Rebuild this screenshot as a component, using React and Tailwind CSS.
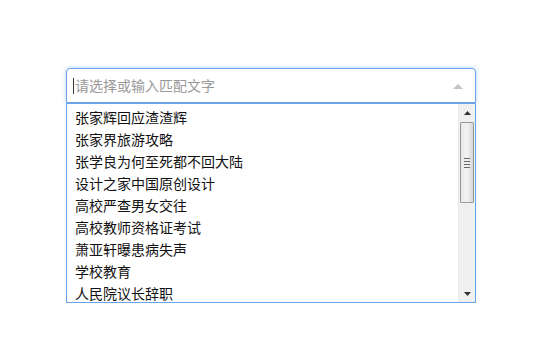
const items = [
  "张家辉回应渣渣辉",
  "张家界旅游攻略",
  "张学良为何至死都不回大陆",
  "设计之家中国原创设计",
  "高校严查男女交往",
  "高校教师资格证考试",
  "萧亚轩曝患病失声",
  "学校教育",
  "人民院议长辞职",
];

export default function App() {
  return (
    <div
      className="w-[539px] h-[360px] bg-white pt-[68px] pl-[66px]"
      style={{ fontFamily: '"Noto Sans CJK SC", "Liberation Sans", sans-serif' }}
    >
      <div className="w-[410px]">
        <div className="h-[35px] flex items-center border border-[#6aa4e8] rounded-t-[4px] shadow-[0_0_4px_rgba(102,160,232,0.5)] bg-white pl-[6px] pr-[10px]">
          <span className="w-px h-[16px] bg-[#333] mr-px" />
          <span className="flex-1 text-[14px] text-[#999]">请选择或输入匹配文字</span>
          <svg width="10" height="6" viewBox="0 0 10 6" className="mr-[2px]">
            <path d="M0 6 L5 1 L10 6 Z" fill="#c4c4c4" />
          </svg>
        </div>
        <div className="h-[200px] flex border border-[#6aa4e8] bg-white overflow-hidden">
          <ul className="flex-1 pt-[2px] pl-[8px]">
            {items.map((t) => (
              <li key={t} className="h-[22px] leading-[22px] text-[14px] text-[#111] whitespace-nowrap">
                {t}
              </li>
            ))}
          </ul>
          <div className="w-[17px] flex flex-col bg-[#f0f0f0] border-l border-[#e8e8e8]">
            <div className="h-[17px] flex items-center justify-center">
              <svg width="7" height="4" viewBox="0 0 7 4">
                <path d="M0 4 L3.5 0 L7 4 Z" fill="#333" />
              </svg>
            </div>
            <div className="mx-[1px] mt-[1px] h-[81px] border border-[#9a9a9a] rounded-[1px] bg-gradient-to-r from-[#e6e6e6] via-[#f4f4f4] to-[#d6d6d6] flex items-center justify-center">
              <div className="flex flex-col gap-[2px]">
                <span className="block w-[6px] h-px bg-[#666]" />
                <span className="block w-[6px] h-px bg-[#666]" />
                <span className="block w-[6px] h-px bg-[#666]" />
                <span className="block w-[6px] h-px bg-[#666]" />
              </div>
            </div>
            <div className="flex-1" />
            <div className="h-[17px] flex items-center justify-center">
              <svg width="7" height="4" viewBox="0 0 7 4">
                <path d="M0 0 L3.5 4 L7 0 Z" fill="#333" />
              </svg>
            </div>
          </div>
        </div>
      </div>
    </div>
  );
}
